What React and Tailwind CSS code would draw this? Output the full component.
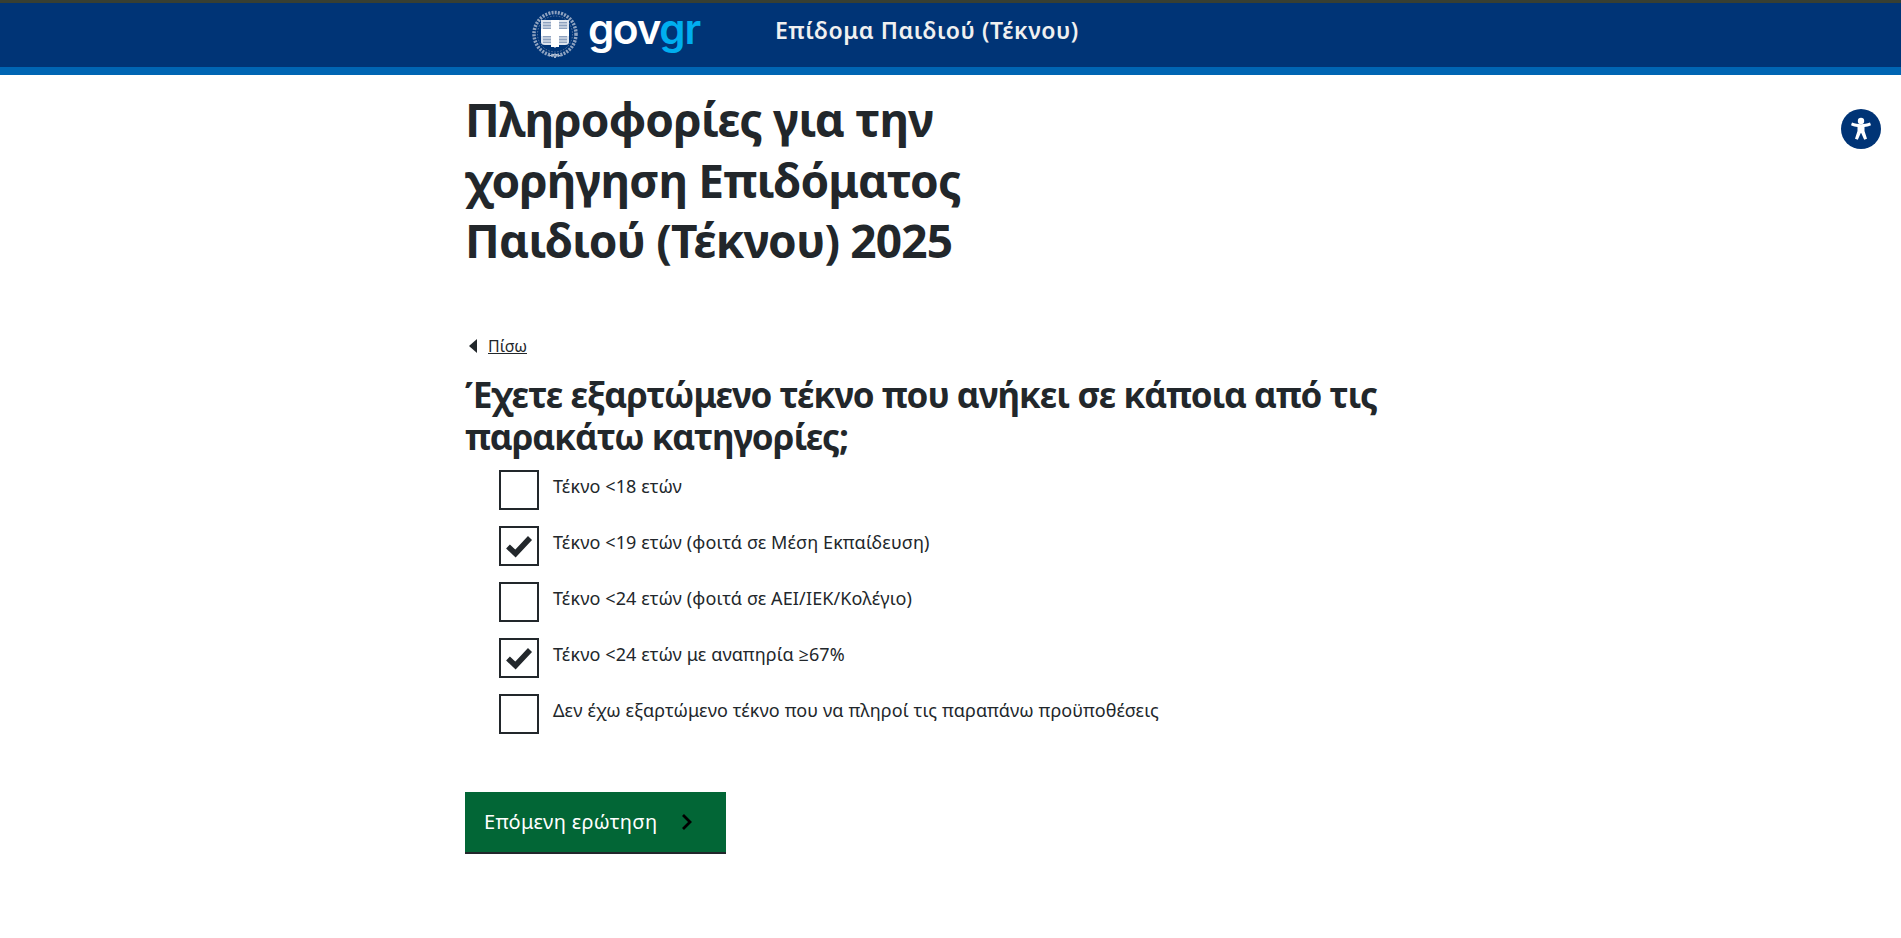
import React, { useState } from "react";

const kategories = [
  { label: "Τέκνο <18 ετών", checked: false },
  { label: "Τέκνο <19 ετών (φοιτά σε Μέση Εκπαίδευση)", checked: true },
  { label: "Τέκνο <24 ετών (φοιτά σε ΑΕΙ/ΙΕΚ/Κολέγιο)", checked: false },
  { label: "Τέκνο <24 ετών με αναπηρία ≥67%", checked: true },
  { label: "Δεν έχω εξαρτώμενο τέκνο που να πληροί τις παραπάνω προϋποθέσεις", checked: false },
];

// Εθνόσημο με στεφάνι
function Emblem() {
  return (
    <svg width="48" height="50" viewBox="0 0 48 50">
      <ellipse cx="24" cy="24" rx="21" ry="21.5" fill="none" stroke="#8fa3c0" strokeWidth="3.5" strokeDasharray="2 1.2" />
      <ellipse cx="24" cy="24" rx="17.5" ry="18" fill="none" stroke="#5f7aa3" strokeWidth="1" strokeDasharray="1.5 1.5" />
      <path d="M22 45l2 3 2-3M18 46l6-2 6 2" fill="none" stroke="#b9c6d8" strokeWidth="1" />
      <path d="M10 10h28v22q0 3-4 3h-7l-3 3-3-3h-7q-4 0-4-3z" fill="#dfe5ee" />
      <path d="M12 12h8v7h-8zM28 12h8v7h-8zM12 26h8v7h-8zM28 26h8v7h-8z" fill="#8ea2bf" />
      <path d="M12 14h8M28 14h8M12 17h8M28 17h8M12 28h8M28 28h8M12 31h8M28 31h8" stroke="#eef1f6" strokeWidth="1" />
      <path d="M20 10h8v9h10v7H28v11h-8V26H10v-7h10z" fill="#fff" />
    </svg>
  );
}

function Checkbox({ label, checked }) {
  const [on, setOn] = useState(checked);
  return (
    <label className="flex items-start cursor-pointer" onClick={(e) => { e.preventDefault(); setOn(!on); }}>
      <span className="w-10 h-10 shrink-0 border-2 border-[#22272b] flex items-center justify-center">
        {on && (
          <svg width="28" height="24" viewBox="0 0 28 24">
            <path d="M3 12.500l7.500 7L25 4" fill="none" stroke="#22272b" strokeWidth="5.500" />
          </svg>
        )}
      </span>
      <span className="ml-[14px] pt-[2px] text-[18px] leading-[28px] tracking-[0.12px] text-[#22272b]">{label}</span>
    </label>
  );
}

export default function App() {
  return (
    <div className="h-[938px] overflow-hidden bg-white font-['Noto_Sans','Open_Sans',sans-serif] relative">
      <header className="bg-[#003476] border-t-[3px] border-t-[#373f33] border-b-[8px] border-b-[#0065b3] h-[75px]">
        <div className="flex items-center h-[64px] pl-[531px]">
          <Emblem />
          <span className="ml-[9px] mt-[-12px] font-['Inter',sans-serif] font-semibold text-[42px] leading-none tracking-[-1.2px] text-white">
            gov<span className="text-[#00aeef]">gr</span>
          </span>
          <span className="ml-[75px] mt-[-10px] text-[23px] tracking-[0.6px] font-semibold text-[#f0f0f0]">Επίδομα Παιδιού (Τέκνου)</span>
        </div>
      </header>

      {/* κουμπί προσβασιμότητας */}
      <button className="absolute left-[1841px] top-[109px] w-10 h-10 rounded-full bg-[#003476] flex items-center justify-center">
        <svg width="30" height="30" viewBox="0 0 30 30" fill="#fff">
          <circle cx="15" cy="7" r="3.200" />
          <path d="M5 11.200l1-2.600c3 1 6 1.700 9 1.700s6-.7 9-1.700l1 2.600c-2.500 1-4.600 1.500-6.500 1.800v4l2.500 7.800-2.800 1L15.200 19h-.4l-3 6.800-2.800-1 2.500-7.800v-4c-1.900-.3-4-.8-6.500-1.800z" />
        </svg>
      </button>

      <main className="pl-[465px] w-[1390px]">
        <h1 className="mt-[14px] w-[560px] text-[46px] leading-[60.5px] tracking-[-0.85px] font-bold text-[#22272b]">
          Πληροφορίες για την χορήγηση Επιδόματος Παιδιού (Τέκνου) 2025
        </h1>

        <a href="#" className="mt-[63px] flex items-center text-[16px] leading-6 text-[#22272b]">
          <svg width="11" height="14" viewBox="0 0 11 14" className="ml-[3px]">
            <path d="M9 0v14L1 7z" fill="#22272b" />
          </svg>
          <span className="ml-[9px] underline">Πίσω</span>
        </a>

        <h2 className="mt-[16px] w-[930px] text-[35px] leading-[42px] tracking-[-0.97px] font-bold text-[#22272b]">
          Έχετε εξαρτώμενο τέκνο που ανήκει σε κάποια από τις παρακάτω κατηγορίες;
        </h2>

        <div className="mt-[12px] ml-[34px] flex flex-col gap-4">
          {kategories.map((k) => (
            <Checkbox key={k.label} label={k.label} checked={k.checked} />
          ))}
        </div>

        <button className="mt-[58px] w-[261px] h-[62px] bg-[#026636] border-b-2 border-[#22272b] flex items-center pl-[19px] text-[20px] tracking-[0.3px] text-white">
          Επόμενη ερώτηση
          <svg width="14" height="18" viewBox="0 0 14 18" className="ml-[23px]">
            <path d="M3 2l7 7-7 7" fill="none" stroke="#000" strokeWidth="2.800" />
          </svg>
        </button>

        <h3 className="mt-[76px] text-[30px] leading-[40px] font-bold text-[#22272b]">Ποσό Επιδόματος</h3>
      </main>
    </div>
  );
}
